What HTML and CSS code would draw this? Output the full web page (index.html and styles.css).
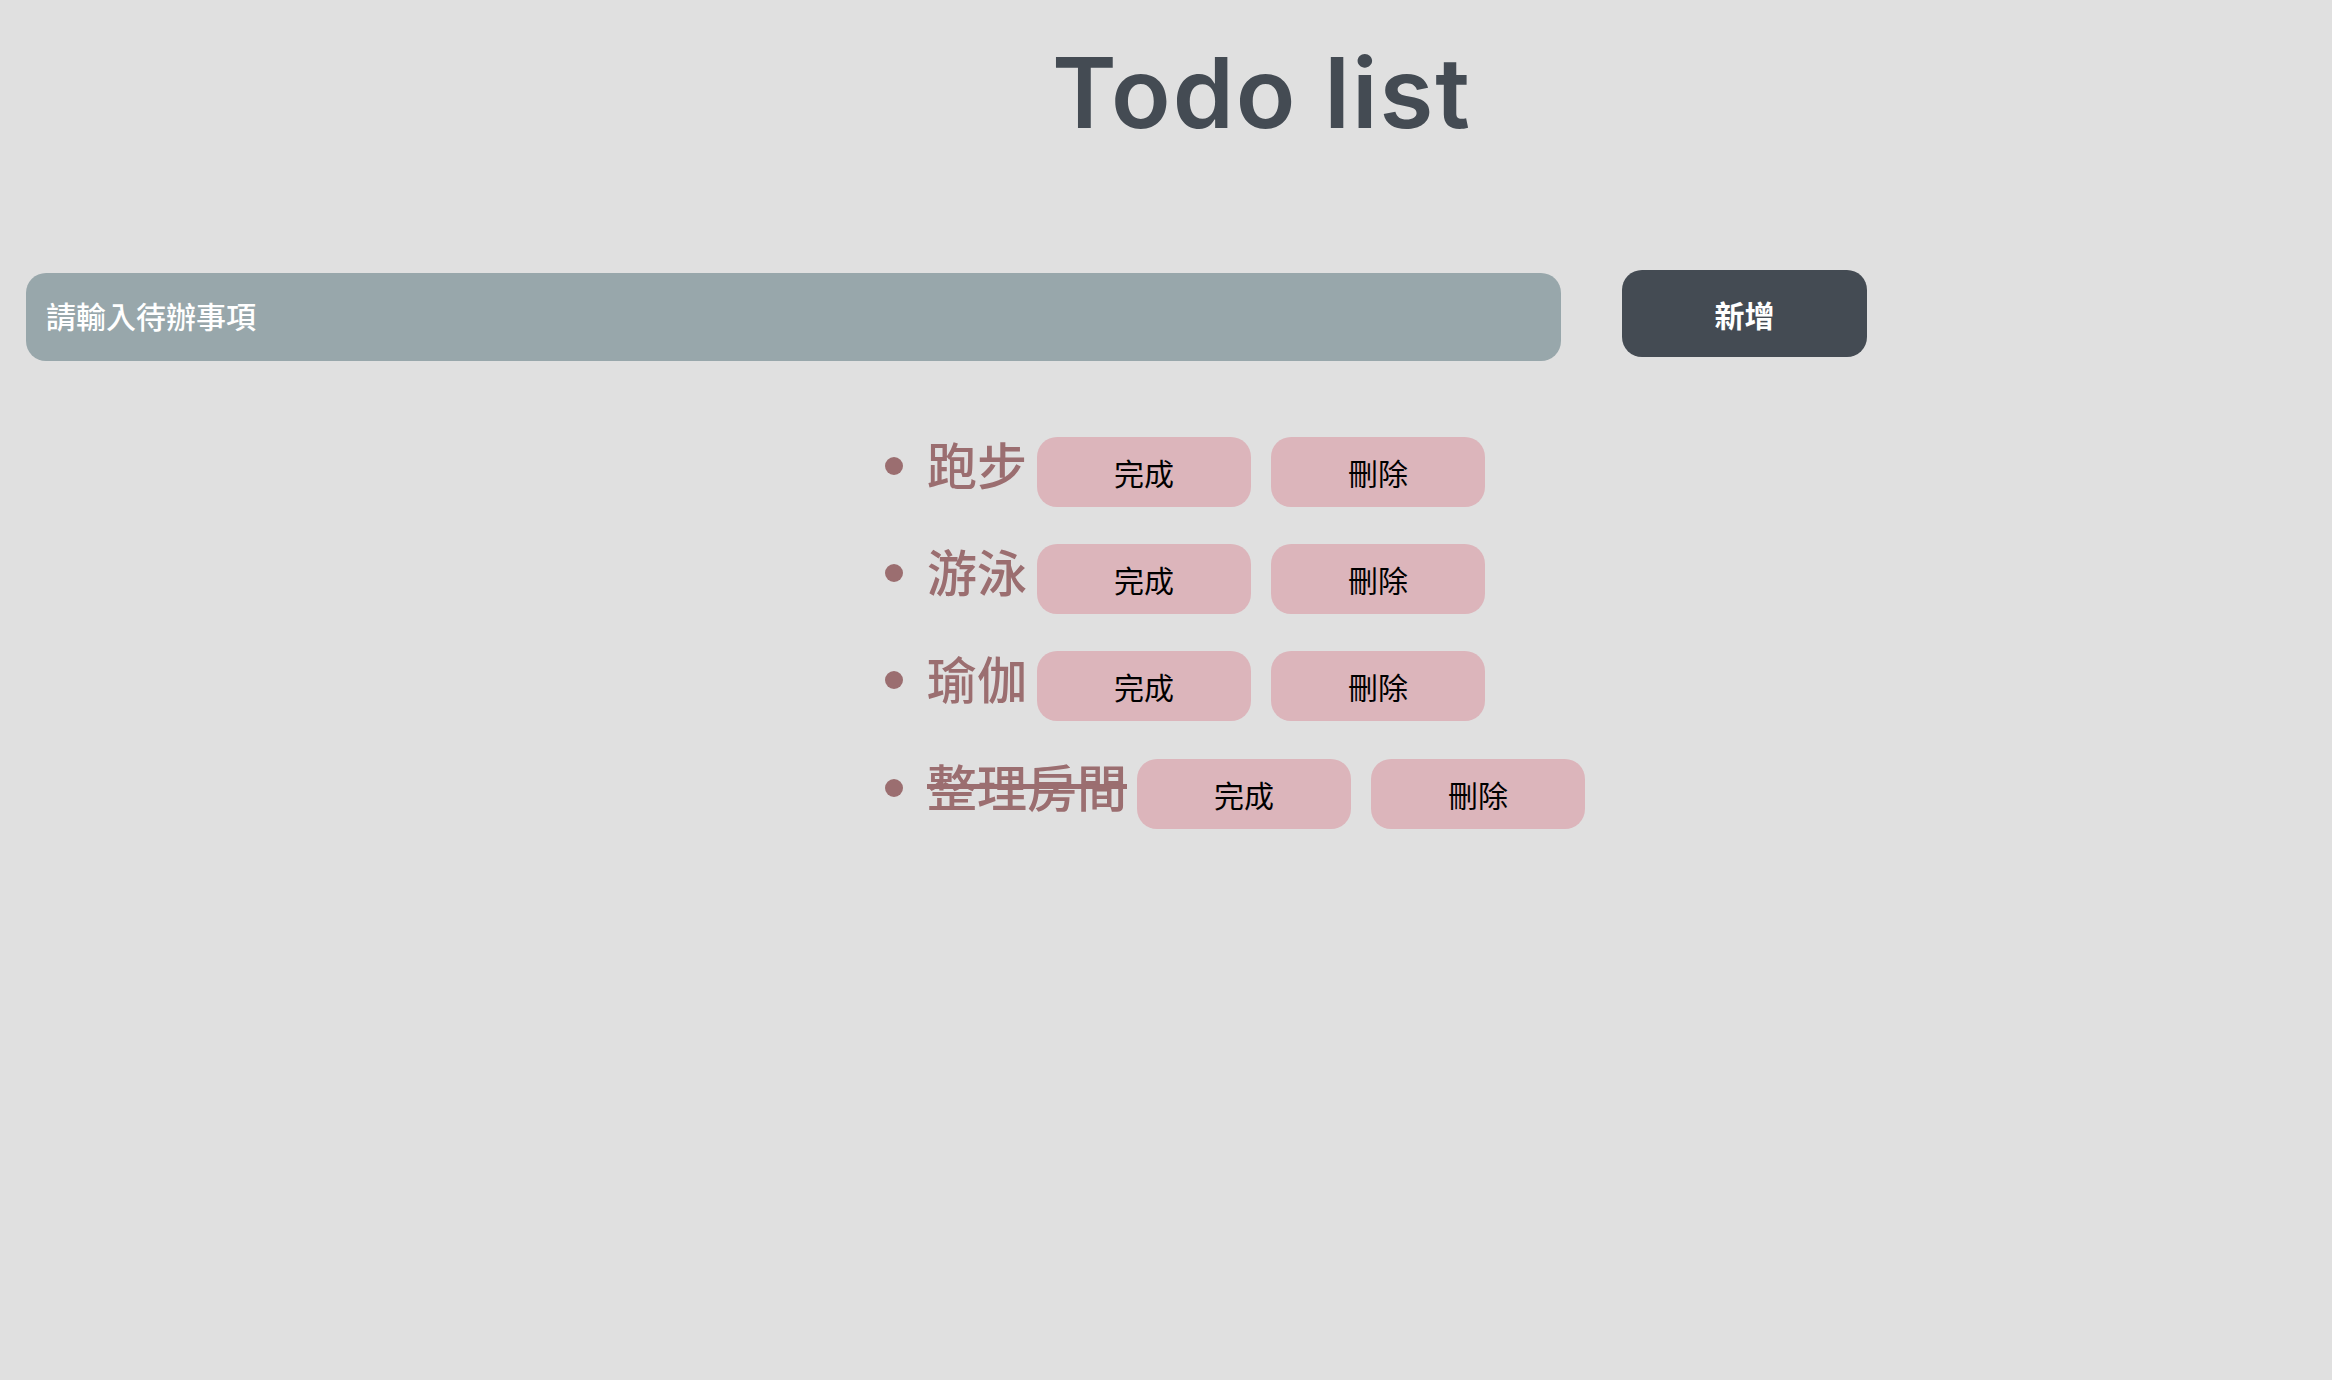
FILE: index.html
```html
<!DOCTYPE html>
<html lang="zh-Hant">
<head>
<meta charset="utf-8">
<title>Todo list</title>
<link rel="stylesheet" href="styles.css">
</head>
<body>
  <h1 class="title">Todo list</h1>
  <div class="add-row">
    <input class="todo-input" type="text" placeholder="請輸入待辦事項">
    <button class="add-btn">新增</button>
  </div>
  <ul class="todo-list">
    <li class="todo-item"><span class="label">跑步</span><button class="act">完成</button><button class="act">刪除</button></li>
    <li class="todo-item"><span class="label">游泳</span><button class="act">完成</button><button class="act">刪除</button></li>
    <li class="todo-item"><span class="label">瑜伽</span><button class="act">完成</button><button class="act">刪除</button></li>
    <li class="todo-item"><span class="label done">整理房間</span><button class="act">完成</button><button class="act">刪除</button></li>
  </ul>
</body>
</html>
```
FILE: styles.css
```css
html, body {
  margin: 0;
  padding: 0;
}
body {
  background: #e0e0e0;
  font-family: "Noto Sans CJK TC", "Noto Sans", sans-serif;
  min-height: 1380px;
}
.title {
  margin: 0;
  padding: 33px 0 0 1052px;
  font-family: Inter, "Noto Sans", sans-serif;
  font-weight: 600;
  font-size: 98px;
  letter-spacing: 2px;
  line-height: 120px;
  color: #444b53;
}
.add-row {
  display: flex;
  align-items: flex-start;
  margin-top: 117px;
  padding-left: 26px;
}
.todo-input {
  box-sizing: border-box;
  width: 1535px;
  height: 88px;
  margin-top: 3px;
  border: none;
  outline: none;
  border-radius: 20px;
  background: #98a7ab;
  padding: 0 0 4px 20px;
  font-family: "Noto Sans CJK TC", sans-serif;
  font-size: 30px;
  font-weight: 500;
  color: #ffffff;
}
.todo-input::placeholder {
  color: #ffffff;
  opacity: 1;
}
.add-btn {
  width: 245px;
  height: 87px;
  margin-left: 61px;
  border: none;
  border-radius: 20px;
  background: #444b53;
  color: #ffffff;
  font-family: "Noto Sans CJK TC", sans-serif;
  font-size: 30px;
  font-weight: 700;
  padding: 0;
}
.todo-list {
  list-style: none;
  margin: 76px 0 0 0;
  padding: 0 0 0 885px;
  display: flex;
  flex-direction: column;
  gap: 37.2px;
}
.todo-item {
  display: flex;
  align-items: flex-start;
}
.todo-item::before {
  content: "";
  width: 18px;
  height: 18px;
  border-radius: 50%;
  background: #9b6e70;
  margin-top: 20px;
  margin-right: 24px;
  flex: none;
}
.label {
  font-size: 50px;
  font-weight: 500;
  line-height: 50px;
  margin-top: 1px;
  margin-right: 10px;
  color: #9b6e70;
}
.label.done {
  background: linear-gradient(#9b6e70, #9b6e70) no-repeat 0 24px / 100% 5px;
}
.act {
  width: 214px;
  height: 70px;
  border: none;
  border-radius: 20px;
  background: #dcb5bb;
  color: #000000;
  font-family: "Noto Sans CJK TC", sans-serif;
  font-size: 30px;
  font-weight: 400;
  padding: 0;
  margin-right: 20px;
}
```
